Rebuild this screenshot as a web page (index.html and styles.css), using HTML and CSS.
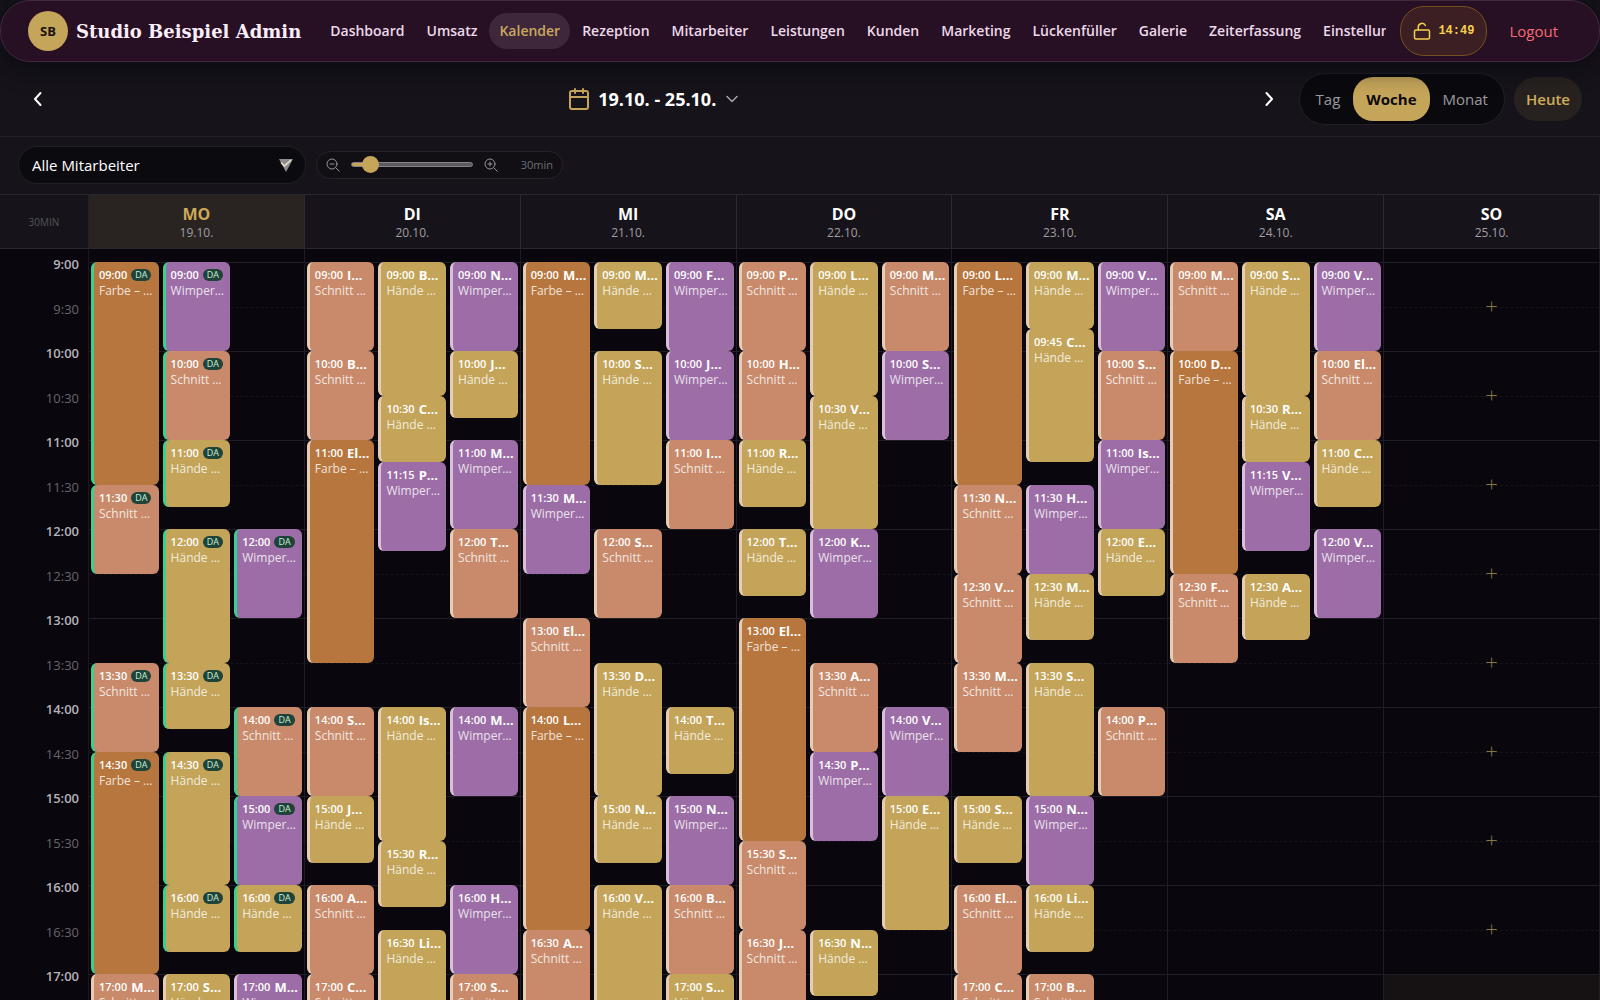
FILE: index.html
```html
<!DOCTYPE html>
<html lang="de">
<head>
<meta charset="utf-8">
<meta name="viewport" content="width=device-width, initial-scale=1">
<title>Studio Beispiel Admin – Kalender</title>
<link rel="stylesheet" href="styles.css">
</head>
<body>
<header class="topbar">
  <div class="brand">
    <span class="avatar">SB</span>
    <span class="brand-name">Studio Beispiel Admin</span>
  </div>
  <nav class="nav">
    <a class="nav-link" href="#">Dashboard</a>
    <a class="nav-link" href="#">Umsatz</a>
    <a class="nav-link active" href="#">Kalender</a>
    <a class="nav-link" href="#">Rezeption</a>
    <a class="nav-link" href="#">Mitarbeiter</a>
    <a class="nav-link" href="#">Leistungen</a>
    <a class="nav-link" href="#">Kunden</a>
    <a class="nav-link" href="#">Marketing</a>
    <a class="nav-link" href="#">Lückenfüller</a>
    <a class="nav-link" href="#">Galerie</a>
    <a class="nav-link" href="#">Zeiterfassung</a>
    <a class="nav-link" href="#">Einstellungen</a>
  </nav>
  <button class="lock" type="button">
    <svg width="18" height="18" viewBox="0 0 24 24" fill="none" stroke="currentColor" stroke-width="2" stroke-linecap="round" stroke-linejoin="round"><rect x="2" y="10.500" width="20" height="12" rx="2"/><path d="M7 10.500V6.500a5 5 0 0 1 9.500-1.800"/></svg>
    <span>14:49</span>
  </button>
  <a class="logout" href="#">Logout</a>
</header>

<main class="page">
  <section class="datebar">
    <button class="arrow" type="button" aria-label="Vorherige Woche">
      <svg width="20" height="20" viewBox="0 0 20 20" fill="none" stroke="currentColor" stroke-width="2" stroke-linecap="round" stroke-linejoin="round"><path d="M12.500 4 7 10l5.500 6"/></svg>
    </button>
    <button class="range" type="button">
      <svg class="range-icon" width="22" height="22" viewBox="0 0 22 22" fill="none" stroke="currentColor" stroke-width="2" stroke-linecap="round" stroke-linejoin="round"><rect x="2" y="3" width="18" height="18" rx="2"/><path d="M2 9h18M7 1v4M15 1v4"/></svg>
      <span>19.10. - 25.10.</span>
      <svg class="range-caret" width="12" height="12" viewBox="0 0 12 12" fill="none" stroke="currentColor" stroke-width="1.500" stroke-linecap="round" stroke-linejoin="round"><path d="M1 3.500 6 8.500l5-5"/></svg>
    </button>
    <button class="arrow" type="button" aria-label="Nächste Woche">
      <svg width="20" height="20" viewBox="0 0 20 20" fill="none" stroke="currentColor" stroke-width="2" stroke-linecap="round" stroke-linejoin="round"><path d="M7.500 4 13 10l-5.500 6"/></svg>
    </button>
    <div class="views">
      <button class="view" type="button">Tag</button>
      <button class="view selected" type="button">Woche</button>
      <button class="view" type="button">Monat</button>
    </div>
    <button class="today" type="button">Heute</button>
  </section>

  <section class="filters">
    <div class="staff">
      <select class="staff-select" aria-label="Mitarbeiter">
        <option>Alle Mitarbeiter</option>
      </select>
      <svg class="staff-caret" width="14" height="13" viewBox="0 0 14 13"><path d="M0 0h14L7 13z" fill="#8d8b90"/><path d="M2 3.500 5.500 7 12 1" fill="none" stroke="#efe2cf" stroke-width="1.500"/></svg>
    </div>
    <div class="zoom">
      <svg width="14" height="14" viewBox="0 0 14 14" fill="none" stroke="currentColor" stroke-linecap="round"><circle cx="6" cy="6" r="5"/><path d="m10 10 3.300 3.300M4 6h4"/></svg>
      <input class="zoom-range" type="range" min="0" max="100" value="10" aria-label="Zoom">
      <svg width="14" height="14" viewBox="0 0 14 14" fill="none" stroke="currentColor" stroke-linecap="round"><circle cx="6" cy="6" r="5"/><path d="m10 10 3.300 3.300M4 6h4M6 4v4"/></svg>
      <span class="zoom-value">30min</span>
    </div>
  </section>

  <section class="calendar">
    <div class="cal-head">
      <div class="cal-unit">30MIN</div>
      <div class="day-head current"><b>MO</b><span>19.10.</span></div>
      <div class="day-head"><b>DI</b><span>20.10.</span></div>
      <div class="day-head"><b>MI</b><span>21.10.</span></div>
      <div class="day-head"><b>DO</b><span>22.10.</span></div>
      <div class="day-head"><b>FR</b><span>23.10.</span></div>
      <div class="day-head"><b>SA</b><span>24.10.</span></div>
      <div class="day-head"><b>SO</b><span>25.10.</span></div>
    </div>
    <div class="cal-body">
      <div class="times" id="times"></div>
    </div>
  </section>
</main>
<script src="calendar.js"></script>
</body>
</html>
```
FILE: styles.css
```css
* { box-sizing: border-box; }

body {
  margin: 0;
  height: 100vh;
  display: flex;
  flex-direction: column;
  overflow: hidden;
  background: #16131a;
  color: #fff;
  font-family: "Open Sans", "Noto Sans", sans-serif;
  font-size: 14px;
}

button, select { font: inherit; color: inherit; border: 0; background: none; padding: 0; }
a { text-decoration: none; }
svg { flex: none; display: block; }

/* Top bar */
.topbar {
  display: flex;
  align-items: center;
  height: 62px;
  flex: none;
  padding: 0 41px 0 27px;
  background: #271023;
  border: 1px solid #40293d;
  border-radius: 30px;
  box-shadow: 0 4px 24px #0a0913;
  position: relative;
}
.brand { display: flex; align-items: center; gap: 8px; flex: none; }
.avatar {
  width: 40px;
  height: 40px;
  border-radius: 50%;
  background: #c5a55a;
  color: #17110f;
  display: grid;
  place-items: center;
  font-size: 13px;
  font-weight: 700;
}
.brand-name {
  font-family: "DejaVu Serif", "Liberation Serif", serif;
  font-size: 18px;
  font-weight: 700;
  color: #fbeefa;
  white-space: nowrap;
}
.nav {
  flex: 1;
  min-width: 0;
  display: flex;
  gap: 2px;
  margin-left: 19px;
  overflow: hidden;
}
.nav-link {
  flex: none;
  padding: 0 10px;
  line-height: 36px;
  border-radius: 18px;
  font-weight: 600;
  color: #ecd9ea;
}
.nav-link.active { background: #3e273b; color: #c9a860; }
.lock {
  display: flex;
  align-items: center;
  gap: 7px;
  flex: none;
  height: 50px;
  margin-left: 14px;
  padding: 0 12px;
  border: 1px solid #75501f;
  border-radius: 24px;
  background: #3c1f22;
  color: #f5d04e;
  font-family: "Liberation Mono", monospace;
  font-size: 12px;
  font-weight: 700;
}
.logout { margin-left: 22px; color: #f66b73; font-size: 15px; font-weight: 500; }

/* Date bar */
.page { flex: 1; min-height: 0; display: flex; flex-direction: column; }
.datebar {
  display: flex;
  align-items: center;
  flex: none;
  height: 75px;
  padding: 0 18px;
  border-bottom: 1px solid #221f26;
}
.arrow { width: 40px; height: 40px; display: grid; place-items: center; }
.range {
  flex: 1;
  display: flex;
  align-items: center;
  justify-content: center;
  gap: 8px;
  font-size: 18px;
  font-weight: 700;
}
.range-icon { color: #c5a55a; }
.range-caret { color: #a5a3a8; margin-left: 2px; }
.views {
  display: flex;
  margin-left: 10px;
  padding: 3px;
  border: 1px solid #222026;
  border-radius: 26px;
  background: #0a090e;
}
.view { height: 44px; padding: 0 13px; border-radius: 20px; font-size: 15px; color: #9b999f; }
.view.selected { background: #c5a55a; color: #0c0a0e; font-weight: 700; }
.today {
  height: 44px;
  margin-left: 9px;
  padding: 0 12px;
  border-radius: 22px;
  background: #27221f;
  color: #cfad5c;
  font-size: 15px;
  font-weight: 600;
}

/* Filters */
.filters {
  display: flex;
  align-items: center;
  gap: 10px;
  flex: none;
  height: 57px;
  padding: 0 18px 2px;
}
.staff { position: relative; width: 288px; height: 38px; }
.staff-select {
  width: 100%;
  height: 100%;
  padding: 0 13px;
  appearance: none;
  border: 1px solid #222026;
  border-radius: 19px;
  background: #0b0a0f;
  font-size: 15px;
}
.staff-caret { position: absolute; right: 13px; top: 13px; pointer-events: none; }
.zoom {
  display: flex;
  align-items: center;
  height: 28px;
  padding: 0 9px;
  gap: 11px;
  border: 1px solid #252229;
  border-radius: 14px;
  background: #110f14;
  color: #97959b;
}
.zoom-range {
  appearance: none;
  width: 122px;
  height: 18px;
  margin: 0;
  background: none;
}
.zoom-range::-webkit-slider-runnable-track {
  height: 5px;
  border: 1px solid #858388;
  border-radius: 3px;
  background: linear-gradient(90deg, #c5a55a 0 12px, #5b5a5e 12px);
}
.zoom-range::-webkit-slider-thumb {
  appearance: none;
  width: 17px;
  height: 17px;
  margin-top: -7px;
  border-radius: 50%;
  background: #c5a55a;
}
.zoom-value { width: 44px; text-align: right; font-size: 11px; color: #6f6d73; }

/* Calendar */
.calendar { flex: 1; min-height: 0; display: flex; flex-direction: column; border-top: 1px solid #29262d; }
.cal-head, .cal-body { display: grid; grid-template-columns: 89px repeat(7, minmax(0, 1fr)); }
.cal-head { flex: none; height: 54px; border-bottom: 1px solid #2b282e; }
.cal-unit {
  display: grid;
  place-items: center;
  border-right: 1px solid #221f26;
  font-size: 10px;
  color: #55535a;
}
.day-head {
  display: flex;
  flex-direction: column;
  align-items: center;
  justify-content: center;
  padding-top: 2px;
  border-right: 1px solid #2b282e;
  line-height: 20px;
}
.day-head b { font-size: 16px; }
.day-head span { font-size: 12px; line-height: 18px; color: #a09ea4; }
.day-head.current { background: #292321; }
.day-head.current b { color: #cda959; }

.cal-body { flex: 1; min-height: 0; overflow: hidden; background: #09060d; }
.times {
  padding: 6px 9px 0 0;
  border-right: 1px solid #1a171e;
  text-align: right;
  line-height: 18px;
}
.hour-label { height: 89px; display: grid; grid-template-rows: 1fr 1fr; }
.hour-label span { color: #67656b; font-size: 13px; }
.hour-label b { color: #b5b3b8; font-size: 13px; font-weight: 600; }

.day { display: grid; padding-top: 13px; border-right: 1px solid #1f1c23; }
.slots, .events { grid-area: 1 / 1; height: 801px; }
.slots { display: grid; grid-template-rows: repeat(9, 89px); }
.slot { display: grid; grid-template-rows: 1fr 1fr; border-top: 1px solid #201d24; }
.slot::after { content: ""; grid-area: 2 / 1; border-top: 1px dashed #16131a; }
.add {
  grid-area: 1 / 1 / 3 / 2;
  z-index: 1;
  color: #87763f;
  font-size: 22px;
  font-weight: 300;
  line-height: 80px;
  padding-bottom: 4px;
}
.slot.hover { background: #161112; }

/* Each row is a quarter of an hour, each column one lane */
.events {
  display: grid;
  grid-template-columns: repeat(3, minmax(0, 1fr));
  grid-template-rows: repeat(36, minmax(0, 1fr));
  column-gap: 4px;
  padding: 0 2px;
}
.event {
  padding: 5px 2px 0 5px;
  overflow: hidden;
  white-space: nowrap;
  border-left: 3px solid #e6cdb4;
  border-radius: 6px;
  line-height: 16px;
}
.event-top { display: flex; align-items: center; gap: 4px; height: 16px; }
.event-top time { font-size: 11px; font-weight: 600; }
.event-top b { font-size: 13px; }
.service { font-size: 12px; opacity: 0.8; }
.badge {
  padding: 0 4px;
  border-radius: 6px;
  background: #1f4338;
  color: #c9efdc;
  font-size: 9px;
  line-height: 12px;
}
.farbe { background: #b7763e; }
.schnitt { background: #c88a6a; }
.haende { background: #c3a458; }
.wimpern { background: #9c6da6; border-left-color: #d9bfdc; }
.here { border-left-color: #3bd08f; }
```
FILE: calendar.js
```js
const kinds = {
  F: ["farbe", "Farbe – …"],
  S: ["schnitt", "Schnitt …"],
  H: ["haende", "Hände …"],
  W: ["wimpern", "Wimper…"],
};

// One string per lane: kind, start, quarters of an hour, client ("DA" = has arrived)
const days = [
  ["F 09:00 10 DA,S 11:30 4 DA,S 13:30 4 DA,F 14:30 10 DA,S 17:00 4 M",
   "W 09:00 4 DA,S 10:00 4 DA,H 11:00 3 DA,H 12:00 6 DA,H 13:30 3 DA,H 14:30 6 DA,H 16:00 3 DA,H 17:00 3 S",
   "W 12:00 4 DA,S 14:00 4 DA,W 15:00 4 DA,H 16:00 3 DA,W 17:00 4 M"],
  ["S 09:00 4 I,S 10:00 4 B,F 11:00 10 El,S 14:00 4 S,H 15:00 3 J,S 16:00 4 A,S 17:00 4 C",
   "H 09:00 6 B,H 10:30 3 C,W 11:15 4 P,H 14:00 6 Is,H 15:30 3 R,H 16:30 6 Li",
   "W 09:00 4 N,H 10:00 3 J,W 11:00 4 M,S 12:00 4 T,W 14:00 4 M,W 16:00 4 H,S 17:00 4 S"],
  ["F 09:00 10 M,W 11:30 4 M,S 13:00 4 El,F 14:00 10 L,S 16:30 4 A",
   "H 09:00 3 M,H 10:00 6 S,S 12:00 4 S,H 13:30 6 D,H 15:00 3 N,H 16:00 6 V",
   "W 09:00 4 F,W 10:00 4 J,S 11:00 4 I,H 14:00 3 T,W 15:00 4 N,S 16:00 4 B,H 17:00 3 S"],
  ["S 09:00 4 P,S 10:00 4 H,H 11:00 3 R,H 12:00 3 T,F 13:00 10 El,S 15:30 4 S,S 16:30 4 J",
   "H 09:00 6 L,H 10:30 6 V,W 12:00 4 K,S 13:30 4 A,W 14:30 4 P,H 16:30 3 N",
   "S 09:00 4 M,W 10:00 4 S,W 14:00 4 V,H 15:00 6 E"],
  ["F 09:00 10 L,S 11:30 4 N,S 12:30 4 V,S 13:30 4 M,H 15:00 3 S,S 16:00 4 El,S 17:00 4 C",
   "H 09:00 3 M,H 09:45 6 C,W 11:30 4 H,H 12:30 3 M,H 13:30 6 S,W 15:00 4 N,H 16:00 3 Li,S 17:00 4 B",
   "W 09:00 4 V,S 10:00 4 S,W 11:00 4 Is,H 12:00 3 E,S 14:00 4 P"],
  ["S 09:00 4 M,F 10:00 10 D,S 12:30 4 F",
   "H 09:00 6 S,H 10:30 3 R,W 11:15 4 V,H 12:30 3 A",
   "W 09:00 4 V,S 10:00 4 El,H 11:00 3 C,W 12:00 4 V"],
  [],
];

const hours = [9, 10, 11, 12, 13, 14, 15, 16, 17];

document.getElementById("times").innerHTML = hours
  .map((h) => `<div class="hour-label"><b>${h}:00</b><span>${h}:30</span></div>`)
  .join("");

function eventHtml(text, lane) {
  const [kind, start, length, client] = text.split(" ");
  const [h, m] = start.split(":").map(Number);
  const row = (h - 9) * 4 + m / 15 + 1;
  const [cls, service] = kinds[kind];
  const here = client === "DA";
  const tag = here ? `<span class="badge">DA</span>` : `<b>${client}…</b>`;
  return `<article class="event ${cls}${here ? " here" : ""}" style="grid-area:${row} / ${lane + 1} / span ${length}">
    <div class="event-top"><time>${start}</time>${tag}</div>
    <div class="service">${service}</div></article>`;
}

const body = document.querySelector(".cal-body");
days.forEach((lanes) => {
  const free = lanes.length === 0;
  const slots = hours
    .map((h) => {
      const hover = free && h === 17;
      const add = free && !hover ? `<button class="add" type="button">+</button>` : "";
      return `<div class="slot${hover ? " hover" : ""}">${add}</div>`;
    })
    .join("");
  const events = lanes
    .map((lane, i) => lane.split(",").map((e) => eventHtml(e, i)).join(""))
    .join("");
  const day = document.createElement("div");
  day.className = "day";
  day.innerHTML = `<div class="slots">${slots}</div>` + (free ? "" : `<div class="events">${events}</div>`);
  body.append(day);
});
```
